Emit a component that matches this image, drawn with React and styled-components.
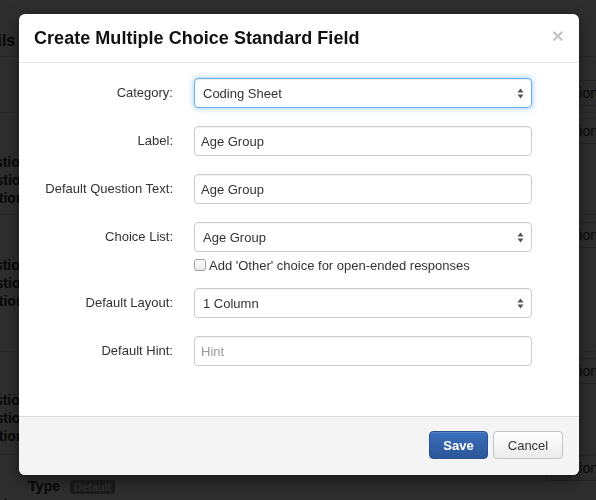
import styled, { createGlobalStyle } from "styled-components";

const GlobalStyle = createGlobalStyle`
  html, body {
    margin: 0;
    padding: 0;
    background: #ffffff;
    font-family: "Liberation Sans", Arial, sans-serif;
    color: #333333;
  }
  * { box-sizing: border-box; }
`;

const Arrows = () => (
  <svg width="7" height="11" viewBox="0 0 7 11">
    <path d="M3.5 0.5 L6.5 4.5 L0.5 4.5 Z" fill="#555" />
    <path d="M3.5 10.5 L6.5 6.5 L0.5 6.5 Z" fill="#555" />
  </svg>
);

const pageRows = [
  { height: 56, lines: [], button: 23 },
  { height: 102, lines: ["Question Text", "Question Hint", "Question Type"], button: 5, top: 40 },
  { height: 137, lines: ["Question Text", "Question Hint", "Question Type"], button: 7, top: 41 },
  { height: 103, lines: ["Question Text", "Question Hint", "Question Type"], button: 6, top: 39 },
];

export default function App() {
  return (
    <>
      <GlobalStyle />
      <Page>
        <PageTitle>Field Details</PageTitle>
        {pageRows.map((row, i) => (
          <PageRow key={i} $height={row.height}>
            <DefList $top={row.top || 0}>
              {row.lines.map((l, j) => (
                <DefItem key={j}>
                  <dt>{l}</dt>
                </DefItem>
              ))}
            </DefList>
            <OptionsButton $top={row.button}>Options</OptionsButton>
          </PageRow>
        ))}
        <PageRow $height={60}>
          <DefList $top={22}>
            <DefItem>
              <dt>Type</dt>
              <dd>
                <Badge>Default</Badge>
              </dd>
            </DefItem>
            <DefItem>
              <dt>Validation Type</dt>
              <dd>Date</dd>
            </DefItem>
          </DefList>
          <OptionsButton $top={0}>Options</OptionsButton>
        </PageRow>
      </Page>
      <Backdrop />
      <Modal>
        <Header>
          <Title>Create Multiple Choice Standard Field</Title>
          <Close>×</Close>
        </Header>
        <Body>
          <Label>Category:</Label>
          <SelectBox $focus>
            Coding Sheet
            <Arrows />
          </SelectBox>

          <Label>Label:</Label>
          <Input defaultValue="Age Group" />

          <Label>Default Question Text:</Label>
          <Input defaultValue="Age Group" />

          <Label>Choice List:</Label>
          <Field>
            <SelectBox>
              Age Group
              <Arrows />
            </SelectBox>
            <CheckRow>
              <Check type="checkbox" />
              Add 'Other' choice for open-ended responses
            </CheckRow>
          </Field>

          <Label>Default Layout:</Label>
          <SelectBox>
            1 Column
            <Arrows />
          </SelectBox>

          <Label>Default Hint:</Label>
          <Input placeholder="Hint" />
        </Body>
        <Footer>
          <Button $primary>Save</Button>
          <Button>Cancel</Button>
        </Footer>
      </Modal>
    </>
  );
}

const Page = styled.div`
  width: 596px;
  height: 500px;
  overflow: hidden;
  padding-top: 32px;
`;

const PageTitle = styled.h3`
  margin: 0 0 0 -79px;
  font-size: 16px;
  font-weight: 700;
  color: #333;
  height: 25px;
  border-bottom: 1px solid #dddddd;
`;

const PageRow = styled.div`
  height: ${(p) => p.$height}px;
  border-bottom: 1px solid #dddddd;
  display: flex;
  justify-content: space-between;
  align-items: flex-start;
`;

const DefList = styled.dl`
  margin: ${(p) => p.$top}px 0 0 0;
  font-size: 14px;
  line-height: 18px;
`;

const DefItem = styled.div`
  display: flex;
  gap: 10px;
  dt {
    width: 60px;
    text-align: right;
    white-space: nowrap;
    direction: rtl;
    font-weight: 700;
  }
  dd {
    margin: 0;
  }
`;

const Badge = styled.span`
  background: #999;
  color: #fff;
  font-size: 11px;
  font-weight: 700;
  padding: 1px 4px;
  border-radius: 3px;
`;

const OptionsButton = styled.div`
  margin-top: ${(p) => p.$top}px;
  margin-right: -20px;
  height: 26px;
  padding: 4px 10px;
  font-size: 14px;
  border: 1px solid #cccccc;
  border-radius: 4px;
  background: #ffffff;
`;

const Backdrop = styled.div`
  position: fixed;
  inset: 0;
  background: rgba(0, 0, 0, 0.82);
`;

const Modal = styled.div`
  position: absolute;
  top: 14px;
  left: 19px;
  width: 560px;
  background: #ffffff;
  border-radius: 6px;
  box-shadow: 0 5px 15px rgba(0, 0, 0, 0.5);
  overflow: hidden;
`;

const Header = styled.div`
  height: 49px;
  padding: 0 15px;
  border-bottom: 1px solid #e5e5e5;
  display: flex;
  align-items: center;
  justify-content: space-between;
`;

const Title = styled.h4`
  margin: 0;
  font-size: 18px;
  font-weight: 700;
  color: #111;
  letter-spacing: 0.04px;
`;

const Close = styled.span`
  font-size: 21px;
  font-weight: 700;
  color: #c8c8c8;
  line-height: 1;
  margin-right: 0;
  margin-top: -6px;
`;

const Body = styled.div`
  display: grid;
  grid-template-columns: 154px 338px;
  column-gap: 21px;
  row-gap: 18px;
  align-items: start;
  padding: 15px 0 50px 0;
`;

const Label = styled.label`
  font-size: 13px;
  line-height: 30px;
  text-align: right;
  color: #333;
`;

const Field = styled.div`
  display: flex;
  flex-direction: column;
`;

const Input = styled.input`
  width: 338px;
  height: 30px;
  padding: 0 6px;
  border: 1px solid #cccccc;
  border-radius: 4px;
  font-family: inherit;
  font-size: 13px;
  color: #333;
  box-shadow: inset 0 1px 1px rgba(0, 0, 0, 0.05);
  outline: none;
  &::placeholder {
    color: #999;
  }
`;

const SelectBox = styled.div`
  width: 338px;
  height: 30px;
  padding: 0 7px 0 8px;
  border: 1px solid ${(p) => (p.$focus ? "#66afe9" : "#cccccc")};
  border-radius: 4px;
  font-size: 13px;
  color: #333;
  display: flex;
  align-items: center;
  justify-content: space-between;
  background: #ffffff;
  box-shadow: ${(p) =>
    p.$focus
      ? "inset 0 1px 1px rgba(0,0,0,.075), 0 0 6px rgba(102,175,233,.7)"
      : "inset 0 1px 1px rgba(0,0,0,.04)"};
`;

const CheckRow = styled.label`
  display: flex;
  align-items: center;
  gap: 3px;
  font-size: 13px;
  height: 18px;
  margin: 4px 0 -4px 0;
  color: #333;
`;

const Check = styled.input`
  appearance: none;
  margin: 0;
  width: 12px;
  height: 12px;
  border: 1px solid #a0a0a0;
  border-radius: 3px;
  background: linear-gradient(#ffffff, #ececec);
`;

const Footer = styled.div`
  height: 59px;
  background: #f4f4f4;
  border-top: 1px solid #dcdcdc;
  display: flex;
  align-items: center;
  justify-content: flex-end;
  gap: 5px;
  padding: 0 16px 2px 0;
`;

const Button = styled.button`
  height: 28px;
  padding: 0 12px;
  min-width: ${(p) => (p.$primary ? "59px" : "70px")};
  font-family: inherit;
  font-size: 13px;
  font-weight: ${(p) => (p.$primary ? 700 : 400)};
  border-radius: 4px;
  color: ${(p) => (p.$primary ? "#ffffff" : "#333333")};
  border: 1px solid ${(p) => (p.$primary ? "#2a5190" : "#c4c4c4")};
  background: ${(p) =>
    p.$primary
      ? "linear-gradient(#3b6fbd, #2b5698)"
      : "linear-gradient(#ffffff, #ebebeb)"};
  box-shadow: inset 0 1px 0 rgba(255, 255, 255, 0.15);
`;
